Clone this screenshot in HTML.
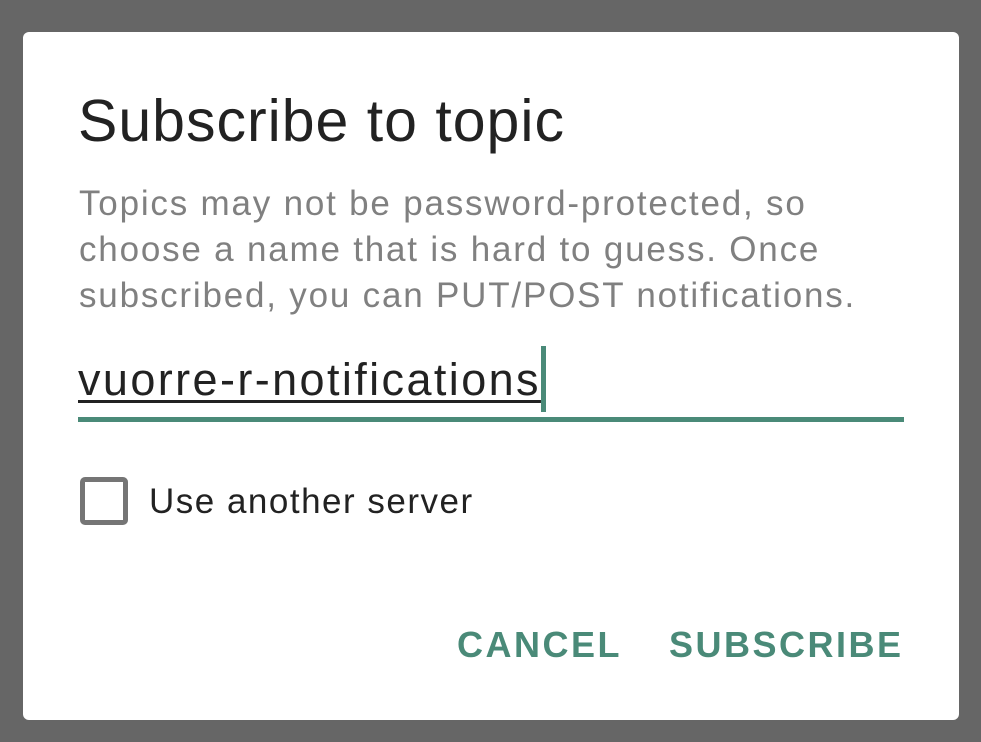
<!DOCTYPE html>
<html><head><meta charset="utf-8"><style>
html,body{margin:0;padding:0;width:981px;height:742px;background:#666;overflow:hidden;font-family:"Liberation Sans",sans-serif}
.d{position:absolute;left:23px;top:32px;width:936px;height:688px;background:#fff;border-radius:6px}
.a{position:absolute;white-space:nowrap}
</style></head><body>
<div class="d"></div>
<div class="a" style="left:78px;top:86px;font-size:59px;line-height:70px;color:#222;letter-spacing:1px">Subscribe to topic</div>
<div class="a" style="left:79px;top:181px;font-size:35px;line-height:46px;color:#808080;letter-spacing:1.8px">Topics may not be password-protected, so<br>choose a name that is hard to guess. Once<br>subscribed, you can PUT/POST notifications.</div>
<div class="a" style="left:78px;top:353px;font-size:45px;line-height:54px;color:#222;letter-spacing:2.4px;text-decoration:underline;text-decoration-thickness:3px;text-underline-offset:5px">vuorre-r-notifications</div>
<div class="a" style="left:541px;top:346px;width:5px;height:66px;background:#4a8a78"></div>
<div class="a" style="left:78px;top:417px;width:826px;height:5px;background:#4a8a78"></div>
<div class="a" style="left:80px;top:477px;width:38px;height:38px;border:5px solid #757575;border-radius:5px"></div>
<div class="a" style="left:149px;top:482px;font-size:35px;line-height:40px;color:#222;letter-spacing:1.5px">Use another server</div>
<div class="a" style="left:457px;top:624px;font-size:36px;line-height:42px;font-weight:bold;letter-spacing:2.5px;color:#4a8a78">CANCEL</div>
<div class="a" style="left:669px;top:624px;font-size:36px;line-height:42px;font-weight:bold;letter-spacing:2.5px;color:#4a8a78">SUBSCRIBE</div>
</body></html>
